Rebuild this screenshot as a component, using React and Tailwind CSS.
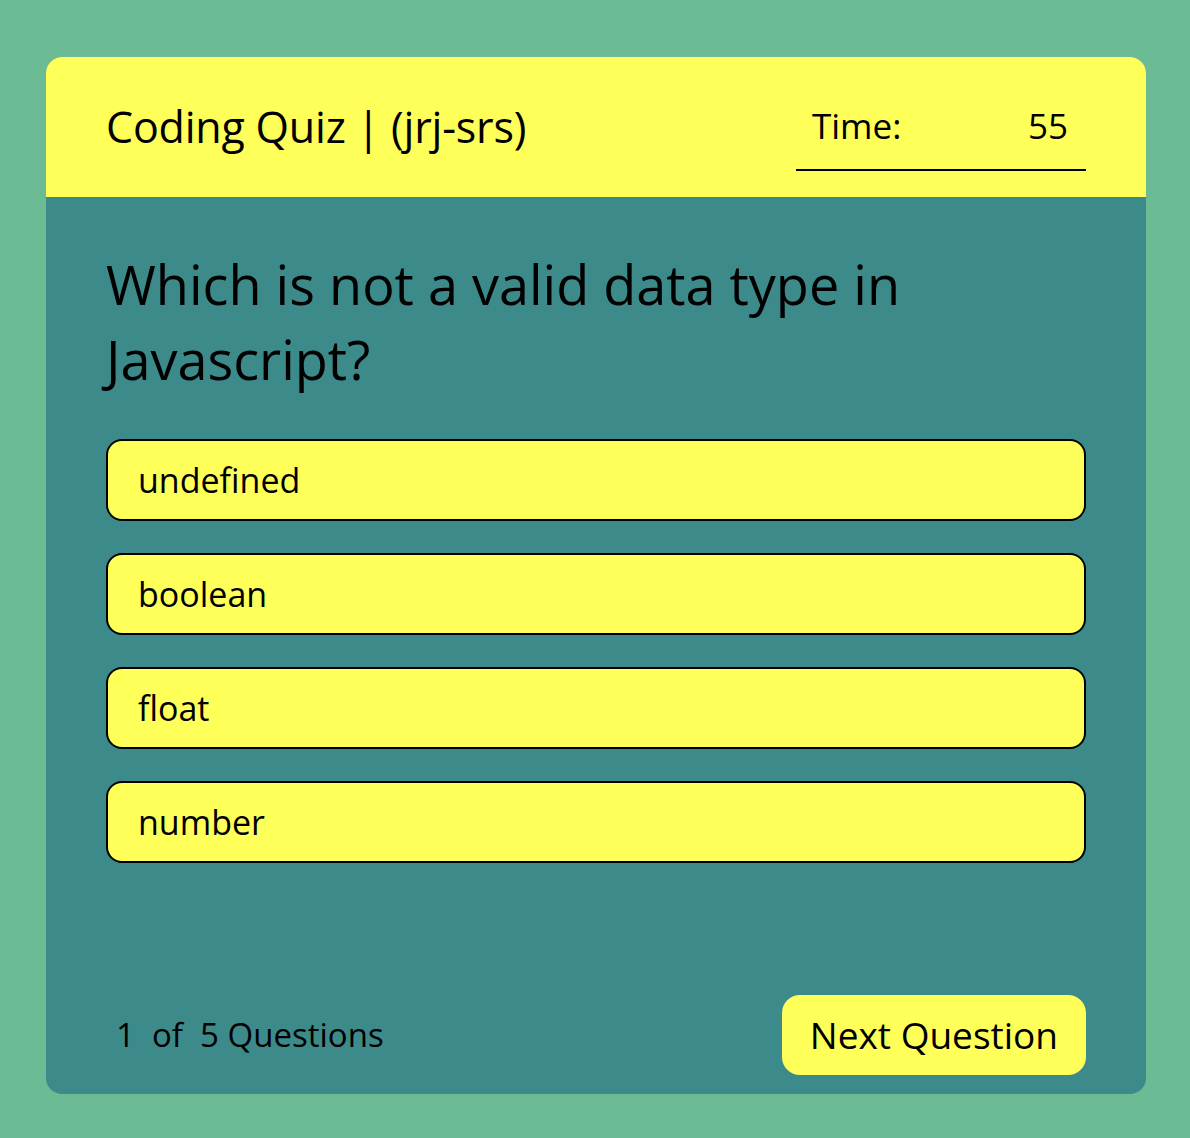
import React from 'react'

const options = ['undefined', 'boolean', 'float', 'number']

export default function App() {
  return (
    <div
      className="min-h-screen bg-[#6bbb94] pt-[57px] text-black"
      style={{ fontFamily: '"Open Sans", "Liberation Sans", sans-serif' }}
    >
      <div className="ml-[46px] flex h-[1037px] w-[1100px] flex-col overflow-hidden rounded-2xl bg-[#3c8a8a]">
        <div className="flex h-[140px] shrink-0 items-center justify-between bg-[#ffff5a] px-[60px]">
          <h1 className="text-[43px] leading-[40px] font-normal tracking-[-0.2px]">Coding Quiz | (jrj-srs)</h1>
          <div className="flex w-[290px] items-center justify-between border-b-2 border-black pt-[23px] pb-[23px] pl-4 pr-[18px] text-[35px] leading-[40px]">
            <span>Time:</span>
            <span>55</span>
          </div>
        </div>

        <div className="flex flex-1 flex-col px-[60px] pt-[50px] pb-[19px]">
          <h2 className="text-[54px] leading-[75px] font-medium">
            Which is not a valid data type in
            <br />
            Javascript?
          </h2>

          <div className="mt-[42px] flex flex-col gap-8">
            {options.map((opt) => (
              <button
                key={opt}
                className="flex h-[82px] items-center rounded-2xl border-2 border-black bg-[#ffff5a] px-[30px] text-left text-[34px]"
              >
                {opt}
              </button>
            ))}
          </div>

          <div className="mt-auto flex items-center justify-between">
            <span className="pl-[10px] text-[33px]">1&nbsp; of&nbsp; 5 Questions</span>
            <button className="h-[80px] rounded-[18px] bg-[#ffff5a] px-[28px] text-[37px]">
              Next Question
            </button>
          </div>
        </div>
      </div>
    </div>
  )
}
